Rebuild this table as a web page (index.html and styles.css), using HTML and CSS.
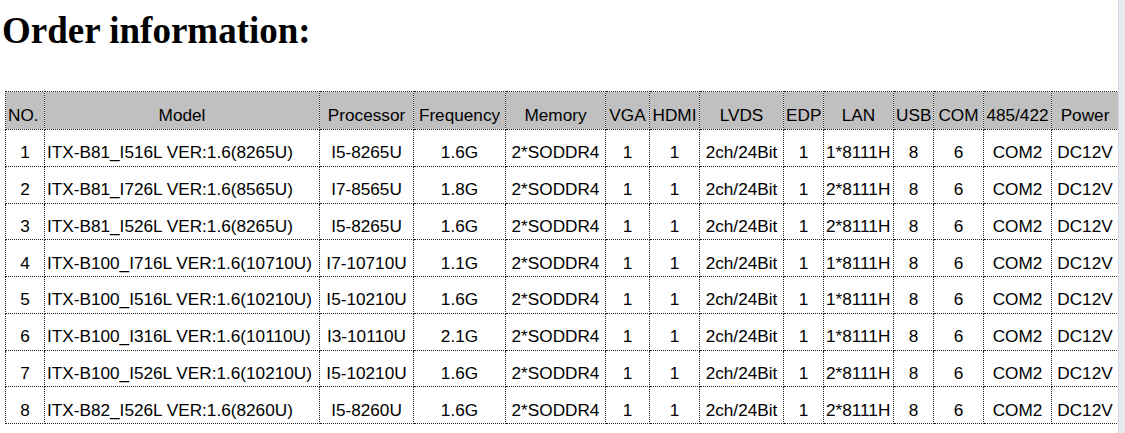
FILE: index.html
```html
<!DOCTYPE html>
<html>
<head>
<meta charset="utf-8">
<link rel="stylesheet" href="styles.css">
</head>
<body>
<div class="page">
  <main class="content">
    <h1 class="title">Order information:</h1>
    <table class="order">
      <colgroup>
        <col class="c-no"><col class="c-model"><col class="c-proc"><col class="c-freq"><col class="c-mem">
        <col class="c-vga"><col class="c-hdmi"><col class="c-lvds"><col class="c-edp"><col class="c-lan">
        <col class="c-usb"><col class="c-com"><col class="c-485"><col class="c-pow">
      </colgroup>
      <thead>
        <tr>
          <th class="left">NO.</th><th>Model</th><th>Processor</th><th>Frequency</th><th>Memory</th>
          <th>VGA</th><th>HDMI</th><th>LVDS</th><th class="left">EDP</th><th>LAN</th>
          <th class="left">USB</th><th>COM</th><th>485/422</th><th>Power</th>
        </tr>
      </thead>
      <tbody>
        <tr><td>1</td><td class="model">ITX-B81_I516L VER:1.6(8265U)</td><td>I5-8265U</td><td>1.6G</td><td>2*SODDR4</td><td>1</td><td>1</td><td>2ch/24Bit</td><td>1</td><td class="left">1*8111H</td><td>8</td><td>6</td><td>COM2</td><td>DC12V</td></tr>
        <tr><td>2</td><td class="model">ITX-B81_I726L VER:1.6(8565U)</td><td>I7-8565U</td><td>1.8G</td><td>2*SODDR4</td><td>1</td><td>1</td><td>2ch/24Bit</td><td>1</td><td class="left">2*8111H</td><td>8</td><td>6</td><td>COM2</td><td>DC12V</td></tr>
        <tr><td>3</td><td class="model">ITX-B81_I526L VER:1.6(8265U)</td><td>I5-8265U</td><td>1.6G</td><td>2*SODDR4</td><td>1</td><td>1</td><td>2ch/24Bit</td><td>1</td><td class="left">2*8111H</td><td>8</td><td>6</td><td>COM2</td><td>DC12V</td></tr>
        <tr><td>4</td><td class="model">ITX-B100_I716L VER:1.6(10710U)</td><td>I7-10710U</td><td>1.1G</td><td>2*SODDR4</td><td>1</td><td>1</td><td>2ch/24Bit</td><td>1</td><td class="left">1*8111H</td><td>8</td><td>6</td><td>COM2</td><td>DC12V</td></tr>
        <tr><td>5</td><td class="model">ITX-B100_I516L VER:1.6(10210U)</td><td>I5-10210U</td><td>1.6G</td><td>2*SODDR4</td><td>1</td><td>1</td><td>2ch/24Bit</td><td>1</td><td class="left">1*8111H</td><td>8</td><td>6</td><td>COM2</td><td>DC12V</td></tr>
        <tr><td>6</td><td class="model">ITX-B100_I316L VER:1.6(10110U)</td><td>I3-10110U</td><td>2.1G</td><td>2*SODDR4</td><td>1</td><td>1</td><td>2ch/24Bit</td><td>1</td><td class="left">1*8111H</td><td>8</td><td>6</td><td>COM2</td><td>DC12V</td></tr>
        <tr><td>7</td><td class="model">ITX-B100_I526L VER:1.6(10210U)</td><td>I5-10210U</td><td>1.6G</td><td>2*SODDR4</td><td>1</td><td>1</td><td>2ch/24Bit</td><td>1</td><td class="left">2*8111H</td><td>8</td><td>6</td><td>COM2</td><td>DC12V</td></tr>
        <tr><td>8</td><td class="model">ITX-B82_I526L VER:1.6(8260U)</td><td>I5-8260U</td><td>1.6G</td><td>2*SODDR4</td><td>1</td><td>1</td><td>2ch/24Bit</td><td>1</td><td class="left">2*8111H</td><td>8</td><td>6</td><td>COM2</td><td>DC12V</td></tr>
      </tbody>
    </table>
  </main>
  <aside class="edge"></aside>
</div>
</body>
</html>
```

FILE: styles.css
```css
html, body {
  margin: 0;
  padding: 0;
  background: #ffffff;
}

.page {
  display: flex;
  width: 1125px;
  height: 433px;
  overflow: hidden;
}

.content {
  flex: 1;
  min-width: 0;
}

.edge {
  width: 6px;
  background: #e6e9f0;
  border-left: 1px solid #d6dae2;
}

.title {
  margin: 11px 0 0 2px;
  font-family: "Liberation Serif", "Times New Roman", serif;
  font-weight: bold;
  font-size: 37px;
  line-height: 40px;
  color: #000;
}

.order {
  margin: 40px 0 0 5px;
  width: 1113px;
  table-layout: fixed;
  border-collapse: collapse;
  font-family: "Liberation Sans", Arial, sans-serif;
  font-size: 17.2px;
  line-height: 19px;
  color: #000;
}

.c-no { width: 39px; }
.c-model { width: 275px; }
.c-proc { width: 94px; }
.c-freq { width: 92px; }
.c-mem { width: 100px; }
.c-vga { width: 44px; }
.c-hdmi { width: 50px; }
.c-lvds { width: 84px; }
.c-edp { width: 40px; }
.c-lan { width: 70px; }
.c-usb { width: 40px; }
.c-com { width: 50px; }
.c-485 { width: 68px; }
.c-pow { width: 67px; }

.order th,
.order td {
  border: 1px dotted #222;
  padding: 0 0 3px 0;
  vertical-align: bottom;
  text-align: center;
  white-space: nowrap;
  overflow: hidden;
}

.order th {
  background: #c0c0c0;
  font-weight: normal;
  height: 33px;
  padding-bottom: 4px;
}

.order td {
  height: 32.25px;
  padding-bottom: 3.5px;
}

.order th.left,
.order td.left {
  text-align: left;
  padding-left: 2px;
}

.order td.model {
  text-align: left;
  padding-left: 2px;
}
```
